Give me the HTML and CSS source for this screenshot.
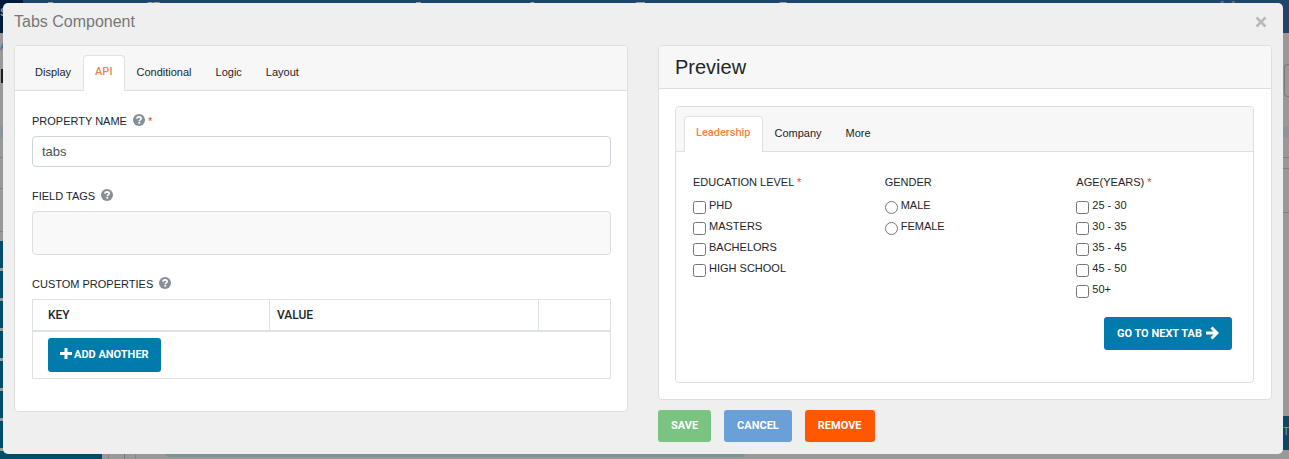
FILE: index.html
```html
<!DOCTYPE html>
<html lang="en">
<head>
<meta charset="utf-8">
<title>Tabs Component</title>
<link rel="stylesheet" href="styles.css">
</head>
<body>
<svg class="sprite" aria-hidden="true">
  <symbol id="help" viewBox="0 0 12 12">
    <circle cx="6" cy="6" r="6" fill="#868e96"/>
    <path d="M4 4.700C4 3.400 4.900 2.800 6.100 2.800s2.100.7 2.100 1.700c0 1.400-1.900 1.400-1.900 2.700" fill="none" stroke="#fff" stroke-width="1.700"/>
    <rect x="5.400" y="8" width="1.800" height="1.700" fill="#fff"/>
  </symbol>
</svg>

<div class="page" aria-hidden="true">
  <div class="page-top">
    <div class="page-brand">S</div>
    <svg class="page-marks" height="4" viewBox="0 0 1260 4" preserveAspectRatio="xMinYMin slice"><path d="M25 2.500h5M124 2.500h5M130 2.500h6M391 2.500h5M505 2.500h4M610 2.500h9M753 2.500h7M1192 2h3M1203 2h3" stroke="#9b9b9b" stroke-width="1"/></svg>
  </div>
  <div class="page-body">
    <div class="page-side">
      <div class="side-link">A</div>
      <div class="side-tab"></div>
      <div class="side-band"></div>
      <div class="side-rows"></div>
      <div class="side-item"></div><div class="side-item"></div><div class="side-item"></div><div class="side-item"></div>
      <div class="side-item"></div><div class="side-item"></div><div class="side-item"></div><div class="side-item"></div>
    </div>
    <div class="page-rails"></div>
    <div class="page-main"><div class="page-alert"></div></div>
    <div class="page-right">
      <div class="right-box"></div>
      <div class="right-band"></div>
      <div class="right-row"></div>
      <div class="right-button">TO</div>
    </div>
  </div>
</div>

<main class="dialog" role="dialog" aria-labelledby="dialog-title">
  <header class="dialog-header">
    <h1 class="dialog-title" id="dialog-title">Tabs Component</h1>
    <button class="close" type="button" aria-label="Close">
      <svg width="12" height="12" viewBox="0 0 12 12"><path d="M1.500 1.500l9 9M10.500 1.500l-9 9" stroke="#b9b9b9" stroke-width="2.600"/></svg>
    </button>
  </header>
  <div class="columns">
    <section class="card">
      <nav class="tabs">
        <a class="tab" href="#display">Display</a>
        <a class="tab active" href="#api">API</a>
        <a class="tab" href="#conditional">Conditional</a>
        <a class="tab" href="#logic">Logic</a>
        <a class="tab" href="#layout">Layout</a>
      </nav>
      <div class="card-body form">
        <div class="field">
          <label class="label" for="property">PROPERTY NAME <svg class="help"><use href="#help"/></svg> <span class="required">*</span></label>
          <input class="input" id="property" type="text" value="tabs">
        </div>
        <div class="field">
          <label class="label" for="tags">FIELD TAGS <svg class="help"><use href="#help"/></svg></label>
          <input class="input tags" id="tags" type="text">
        </div>
        <div class="field">
          <div class="label">CUSTOM PROPERTIES <svg class="help"><use href="#help"/></svg></div>
          <table class="table">
            <colgroup><col class="col-key"><col class="col-value"><col></colgroup>
            <thead><tr><th class="first">KEY</th><th>VALUE</th><th></th></tr></thead>
            <tbody><tr><td class="first" colspan="3">
              <button class="button add" type="button"><svg width="12" height="14" viewBox="0 0 12 14"><path d="M6 0v11M0 5.500h12" stroke="#fff" stroke-width="3"/></svg>ADD ANOTHER</button>
            </td></tr></tbody>
          </table>
        </div>
      </div>
    </section>

    <div class="right">
      <section class="card">
        <h2 class="card-title">Preview</h2>
        <div class="card-body">
          <div class="card">
            <nav class="tabs">
              <a class="tab active" href="#leadership">Leadership</a>
              <a class="tab" href="#company">Company</a>
              <a class="tab" href="#more">More</a>
            </nav>
            <div class="preview">
              <div class="questions">
                <fieldset class="group">
                  <legend class="label">EDUCATION LEVEL <span class="required">*</span></legend>
                  <label class="option"><input type="checkbox">PHD</label>
                  <label class="option"><input type="checkbox">MASTERS</label>
                  <label class="option"><input type="checkbox">BACHELORS</label>
                  <label class="option"><input type="checkbox">HIGH SCHOOL</label>
                </fieldset>
                <fieldset class="group">
                  <legend class="label">GENDER</legend>
                  <label class="option"><input type="radio" name="gender">MALE</label>
                  <label class="option"><input type="radio" name="gender">FEMALE</label>
                </fieldset>
                <fieldset class="group">
                  <legend class="label">AGE(YEARS) <span class="required">*</span></legend>
                  <label class="option"><input type="checkbox">25 - 30</label>
                  <label class="option"><input type="checkbox">30 - 35</label>
                  <label class="option"><input type="checkbox">35 - 45</label>
                  <label class="option"><input type="checkbox">45 - 50</label>
                  <label class="option"><input type="checkbox">50+</label>
                </fieldset>
              </div>
              <button class="button next" type="button">GO TO NEXT TAB <svg width="13" height="14" viewBox="0 0 13 14"><path d="M0 7h10M5.500 1.500L11 7l-5.500 5.500" fill="none" stroke="#fff" stroke-width="3"/></svg></button>
            </div>
          </div>
        </div>
      </section>
      <div class="actions">
        <button class="button save" type="button">SAVE</button>
        <button class="button cancel" type="button">CANCEL</button>
        <button class="button remove" type="button">REMOVE</button>
      </div>
    </div>
  </div>
</main>
</body>
</html>
```
FILE: styles.css
```css
* { box-sizing: border-box; }
body { margin: 0; overflow: hidden; background: #999; font-family: "Liberation Sans", Arial, sans-serif; font-size: 11px; color: #212529; }
.sprite { display: none; }

.page { display: flex; flex-direction: column; height: 100vh; overflow: hidden; }
.page-top { display: flex; flex: none; height: 33px; background: #1e456e; }
.page-brand { width: 23px; flex: none; background: #001a39; color: #999; font-weight: 700; line-height: 24px; }
.page-marks { flex: 1; }
.page-body { display: flex; flex: 1; min-height: 0; }
.page-side { display: flex; flex-direction: column; gap: 3px; width: 102px; }
.page-side > div { flex: none; }
.side-link { height: 33px; padding-top: 7px; color: #2b6c99; }
.side-tab { width: 3px; height: 14px; background: linear-gradient(90deg, #999 1px, #1c1c1c 1px); }
.side-band { height: 10px; margin-top: 41px; background: #8b949d; }
.side-rows { height: 75px; margin: 17px 0 6px; border: 1px solid #808080; border-width: 1px 0; background: linear-gradient(#999 30px, #808080 30px, #808080 31px, #999 31px); }
.side-item { height: 27px; background: #004c6b; }
.page-rails { width: 28px; margin-left: 6px; border-left: 1px solid #858585; border-right: 1px solid #858585; background: linear-gradient(90deg, #999 15px, #777 15px, #777 16px, #999 16px); }
.page-main { display: flex; align-items: flex-end; flex: 1; padding: 0 0 2px 29px; }
.page-alert { width: 580px; height: 60px; background: #7c9396; border-radius: 4px; }
.page-right { width: 6px; }
.right-box { height: 33px; margin-top: 31px; margin-left: 1px; border: 1px solid #777b80; border-right: 0; border-radius: 4px 0 0 4px; }
.right-band { height: 10px; margin-top: 30px; background: #8b949d; }
.right-row { height: 56px; margin-top: 20px; border: 1px solid #808080; border-width: 1px 0; background: linear-gradient(#999 10px, #808080 10px, #808080 11px, #999 11px); }
.right-button { height: 34px; margin-top: 203px; background: #004c6b; color: #999; font-size: 10px; line-height: 32px; }

.dialog { position: absolute; top: 3px; left: 3px; right: 6px; padding: 0 11px 12px; background: #efefef; border-radius: 5px; }
.dialog-header { display: flex; justify-content: space-between; align-items: center; height: 42px; padding-bottom: 4px; }
.dialog-title { margin: 0; font-size: 16px; font-weight: 400; color: #777; }
.close { display: flex; margin-right: 5px; padding: 0; border: 0; background: none; }

.columns { display: grid; grid-template-columns: 1fr 1fr; gap: 30px; align-items: start; }
.card { background: #fff; border: 1px solid #dfdfdf; border-radius: 4px; }
.tabs { display: flex; height: 45px; padding: 9px 8px 0; background: #f7f7f7; border-bottom: 1px solid #dfdfdf; border-radius: 3px 3px 0 0; }
.tab { height: 36px; padding: 0 11px; border: 1px solid transparent; border-bottom: 0; border-radius: 4px 4px 0 0; font: 11px/32px "Liberation Sans", Arial, sans-serif; color: #212529; text-decoration: none; }
.tab.active { background: #fff; border-color: #dee2e6; color: #fb8247; font: 500 11px/32px Roboto, sans-serif; }
.card-title { margin: 0; padding: 0 16px; font-size: 20px; font-weight: 400; line-height: 42px; background: #f7f7f7; border-bottom: 1px solid #dfdfdf; border-radius: 3px 3px 0 0; }
.card-body { padding: 17px 17px 16px 16px; }
.form { display: flex; flex-direction: column; gap: 20px; padding: 21px 16px 32px 17px; }

.label { display: block; padding: 0; margin-bottom: 6px; font: 11px/18px "Liberation Sans", Arial, sans-serif; color: #212529; }
.help { width: 12px; height: 12px; margin-left: 3px; vertical-align: -1px; }
.required { color: #f33; }
.input { display: block; width: 100%; height: 31px; padding: 0 9px; border: 1px solid #ced4da; border-radius: 4px; background: #fff; font: 13px "Liberation Sans", Arial, sans-serif; color: #495057; }
.tags { height: 44px; background: #f9f9f9; border-color: #ddd; }

.table { width: 100%; border-collapse: collapse; table-layout: fixed; }
.col-key { width: 41%; }
.col-value { width: 46.500%; }
.table th, .table td { padding: 6px 7px; border: 1px solid #dee2e6; text-align: left; }
.table th { height: 31px; padding: 5px 7px; border-bottom-width: 2px; font: 500 12px/18px Roboto, sans-serif; }
.table .first { padding-left: 15px; }

.button { display: inline-flex; align-items: center; height: 32px; padding: 0 13px 1px; border: 0; border-radius: 3px; color: #fff; font: 700 11px Roboto, sans-serif; }
.add { gap: 2px; height: 34px; padding: 0 12px; background: #007bab; }
.next { gap: 4px; height: 33px; background: #007bab; }
.save { background: #7bc380; }
.cancel { background: #6a9fd8; }
.remove { background: #ff5800; }
.actions { display: flex; gap: 13px; padding-top: 10px; }

.preview { display: flex; flex-direction: column; padding: 21px 0 32px 17px; }
.questions { display: grid; grid-template-columns: repeat(3, 1fr); margin-right: -15px; }
.group { margin: 0; padding: 0; border: 0; min-width: 0; }
.group .label { margin-bottom: 5px; }
.option { display: flex; gap: 3px; height: 21px; font: 11px/18px "Liberation Sans", Arial, sans-serif; }
.option input { width: 13px; height: 13px; margin: 5px 0 0; }
.next { align-self: flex-end; margin: 16px 21px 0 0; }
```
